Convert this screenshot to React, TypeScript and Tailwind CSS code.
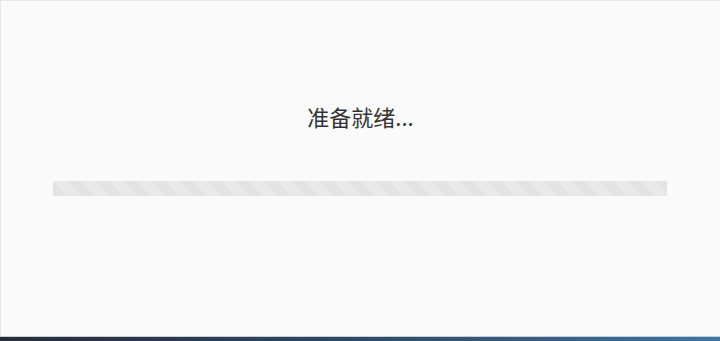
import React from "react";

export default function App() {
  return (
    <div className="w-[720px] h-[341px] flex flex-col bg-[#fafafa] overflow-hidden" style={{ fontFamily: '"Noto Sans CJK SC", "Noto Sans", sans-serif' }}>
      <div className="flex-1 flex flex-col items-center border-t border-l border-[#e6e6e6] pt-[100px]">
        <div className="text-[22px] leading-[30px] text-[#333333]">准备就绪...</div>
        <div
          className="mt-[50px] -ml-[1px] w-[614px] h-[15px] bg-[#e3e3e3]"
          style={{
            backgroundImage:
              "linear-gradient(45deg, rgba(255,255,255,0.22) 25%, transparent 25%, transparent 50%, rgba(255,255,255,0.22) 50%, rgba(255,255,255,0.22) 75%, transparent 75%, transparent)",
            backgroundSize: "28px 28px",
          }}
        />
      </div>
      <div className="h-[1px] bg-[#c9ced4]" />
      <div className="h-[4px] bg-gradient-to-r from-[#262c3a] via-[#2f4a66] to-[#3f74a3]" />
    </div>
  );
}
